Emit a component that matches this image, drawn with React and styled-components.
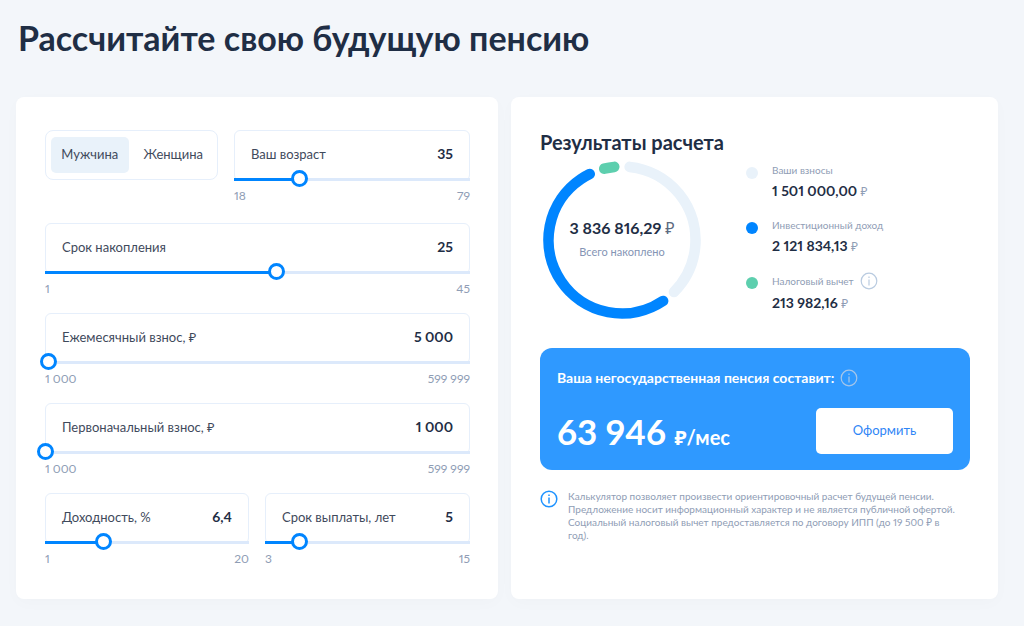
import React, { useState } from 'react';
import styled, { createGlobalStyle } from 'styled-components';

const GlobalStyle = createGlobalStyle`
  * {
    box-sizing: border-box;
  }
  body {
    margin: 0;
    background-color: #f3f6fa;
    color: #1f2e45;
    font-family: Lato, "Noto Sans", sans-serif;
    font-variant-numeric: proportional-nums;
  }
  button {
    font-family: inherit;
    cursor: pointer;
  }
`;

const Page = styled.main`
  padding: 14px 26px 27px 16px;
`;
const Title = styled.h1`
  margin: 0 0 35px 2px;
  font-size: 34px;
  line-height: 48px;
  font-weight: 700;
`;
const Columns = styled.div`
  display: grid;
  grid-template-columns: 482fr 487fr;
  gap: 13px;
`;
const Card = styled.section`
  padding: 33px 28px 32px 29px;
  background-color: white;
  border-radius: 8px;
  box-shadow: 0 4px 16px rgba(31, 46, 69, 0.02);
`;

const Form = styled.form`
  display: flex;
  flex-direction: column;
  gap: 16px;
`;
const Row = styled.div`
  display: grid;
  grid-template-columns: ${(props) => props.$columns || '1fr'};
  align-items: start;
  gap: 16px;
  margin-bottom: ${(props) => (props.$first ? '3px' : '0')};
`;
const Toggle = styled.div`
  display: flex;
  gap: 6px;
  height: 50px;
  padding: 6px 5px;
  border: 1px solid #e6effb;
  border-radius: 8px;
`;
const ToggleButton = styled.button`
  flex: 1;
  padding: 0 0 2px;
  border: none;
  border-radius: 5px;
  font-size: 13px;
  color: #3f4a5c;
  background-color: ${(props) => (props.$active ? '#e9f2fa' : 'transparent')};
`;

const FieldBox = styled.div`
  display: flex;
  align-items: center;
  justify-content: space-between;
  height: 51px;
  padding: 0 16px 4px;
  border: 1px solid #e6effb;
  border-radius: 6px;
`;
const Label = styled.label`
  font-size: 13px;
  color: #3f4a5c;
`;
const Value = styled.output`
  font-size: 14px;
  font-weight: 700;
`;
const Range = styled.input`
  appearance: none;
  display: block;
  width: calc(100% + 16px);
  height: 17px;
  margin: -10px -8px 0;
  background: transparent;
  cursor: pointer;
  &::-webkit-slider-runnable-track {
    height: 3px;
    background: linear-gradient(
      to right,
      transparent 8px,
      #0085ff 8px,
      #0085ff var(--fill),
      #dce9fb var(--fill),
      #dce9fb calc(100% - 8px),
      transparent calc(100% - 8px)
    );
  }
  &::-webkit-slider-thumb {
    appearance: none;
    width: 17px;
    height: 17px;
    margin-top: -8px;
    border: 3px solid #0085ff;
    border-radius: 50%;
    background-color: white;
  }
`;
const Limits = styled.div`
  display: flex;
  justify-content: space-between;
  font-size: 12px;
  line-height: 16px;
  color: #8f9db5;
`;

const ResultTitle = styled.h2`
  margin: 0;
  font-size: 20px;
  line-height: 24px;
  font-weight: 700;
`;
const Summary = styled.div`
  display: flex;
  gap: 45px;
  margin: 7px 0 29px 3px;
`;
const Donut = styled.div`
  display: grid;
  flex: none;
  width: 158px;
  height: 158px;
  > * {
    grid-area: 1 / 1;
  }
`;
const Total = styled.div`
  align-self: center;
  text-align: center;
  font-size: 16px;
  line-height: 24px;
  font-weight: 700;
`;
const Caption = styled.div`
  font-size: 11px;
  line-height: 24px;
  font-weight: 400;
  color: #8494b4;
`;
const Currency = styled.span`
  font-weight: 400;
  font-size: ${(props) => (props.$small ? '12px' : '16px')};
  line-height: 1;
  color: ${(props) => (props.$small ? '#8f9db5' : '#5d6a80')};
`;
const Legend = styled.ul`
  display: flex;
  flex-direction: column;
  gap: 13px;
  margin: 0;
  padding: 1px 0 0;
  list-style: none;
`;
const LegendItem = styled.li`
  display: flex;
  gap: 14px;
`;
const Dot = styled.span`
  width: 12px;
  height: 12px;
  margin-top: 5px;
  border-radius: 50%;
  background-color: ${(props) => props.$color};
`;
const LegendLabel = styled.div`
  display: flex;
  align-items: center;
  gap: 6px;
  min-height: 16px;
  font-size: 10px;
  color: #8f9db5;
`;
const LegendValue = styled.div`
  font-size: 14px;
  line-height: 26px;
  font-weight: 700;
`;

const Pension = styled.div`
  padding: 20px 17px 16px 17px;
  border-radius: 12px;
  background-color: #2f99ff;
  color: white;
`;
const PensionLabel = styled.div`
  display: flex;
  align-items: center;
  gap: 6px;
  font-size: 14px;
  line-height: 20px;
  font-weight: 700;
`;
const PensionRow = styled.div`
  display: flex;
  align-items: center;
  justify-content: space-between;
  margin-top: 20px;
`;
const Amount = styled.div`
  font-size: 35px;
  line-height: 46px;
  font-weight: 700;
`;
const PerMonth = styled.span`
  font-size: 20px;
  line-height: 1;
`;
const SubmitButton = styled.button`
  width: 137px;
  height: 46px;
  padding: 0 0 2px;
  border: none;
  border-radius: 5px;
  background-color: white;
  color: #2f86f6;
  font-size: 13px;
`;
const Note = styled.div`
  display: flex;
  gap: 10px;
  margin-top: 20px;
  padding-right: 8px;
  color: #8f9db5;
`;
const NoteText = styled.p`
  margin: 0;
  font-size: 10px;
  line-height: 13px;
`;
const InfoSvg = styled.svg`
  flex: none;
  color: ${(props) => props.$color};
`;

const InfoIcon = ({ color, strokeWidth = 1.2 }) => (
  <InfoSvg $color={color} width="18" height="18" viewBox="0 0 18 18" fill="none" stroke="currentColor" strokeWidth={strokeWidth} aria-hidden="true">
    <circle cx="9" cy="9" r="7.8" />
    <path d="M9 7.4v6M9 4.4v1.5" />
  </InfoSvg>
);

const format = (value) => {
  const [whole, rest] = String(value).split('.');
  const grouped = whole.replace(/\B(?=(\d{3})+$)/g, ' ');
  return rest ? `${grouped},${rest}` : grouped;
};

const Field = ({ id, label, min, max, step = 1, initial }) => {
  const [value, setValue] = useState(initial);
  const part = (value - min) / (max - min);
  return (
    <div>
      <FieldBox>
        <Label htmlFor={id}>{label}</Label>
        <Value htmlFor={id}>{format(value)}</Value>
      </FieldBox>
      <Range
        id={id}
        type="range"
        min={min}
        max={max}
        step={step}
        value={value}
        onChange={(e) => setValue(Number(e.target.value))}
        style={{ '--fill': `calc(8px + (100% - 16px) * ${part})` }}
      />
      <Limits>
        <span>{format(min)}</span>
        <span>{format(max)}</span>
      </Limits>
    </div>
  );
};

const segments = [
  { color: '#e9f2fa', start: 6, length: 129 },
  { color: '#0085ff', start: 146, length: 188 },
  { color: '#5dcfae', start: 346, length: 8 },
];

const legend = [
  { label: 'Ваши взносы', value: '1 501 000,00', color: '#e9f2fa' },
  { label: 'Инвестиционный доход', value: '2 121 834,13', color: '#0085ff' },
  { label: 'Налоговый вычет', value: '213 982,16', color: '#5dcfae', info: true },
];

const App = () => {
  const [gender, setGender] = useState('Мужчина');

  return (
    <Page>
      <GlobalStyle />
      <Title>Рассчитайте свою будущую пенсию</Title>
      <Columns>
        <Card>
          <Form>
            <Row $columns="173fr 236fr" $first>
              <Toggle>
                {['Мужчина', 'Женщина'].map((name) => (
                  <ToggleButton
                    key={name}
                    type="button"
                    $active={gender === name}
                    aria-pressed={gender === name}
                    onClick={() => setGender(name)}
                  >
                    {name}
                  </ToggleButton>
                ))}
              </Toggle>
              <Field id="age" label="Ваш возраст" min={18} max={79} initial={35} />
            </Row>
            <Field id="term" label="Срок накопления" min={1} max={45} initial={25} />
            <Field id="monthly" label="Ежемесячный взнос, ₽" min={1000} max={599999} initial={5000} />
            <Field id="first" label="Первоначальный взнос, ₽" min={1000} max={599999} initial={1000} />
            <Row $columns="204fr 205fr">
              <Field id="yield" label="Доходность, %" min={1} max={20} step={0.1} initial={6.4} />
              <Field id="payout" label="Срок выплаты, лет" min={3} max={15} initial={5} />
            </Row>
          </Form>
        </Card>
        <Card>
          <ResultTitle>Результаты расчета</ResultTitle>
          <Summary>
            <Donut>
              <svg width="158" height="158" viewBox="0 0 158 158" fill="none" aria-hidden="true">
                {segments.map((s) => (
                  <circle
                    key={s.color}
                    cx="79"
                    cy="79"
                    r="73.5"
                    stroke={s.color}
                    strokeWidth="10.6"
                    strokeLinecap="round"
                    pathLength="360"
                    strokeDasharray={`${s.length} ${360 - s.length}`}
                    transform={`rotate(${s.start - 90} 79 79)`}
                  />
                ))}
              </svg>
              <Total>
                3 836 816,29 <Currency>₽</Currency>
                <Caption>Всего накоплено</Caption>
              </Total>
            </Donut>
            <Legend>
              {legend.map((item) => (
                <LegendItem key={item.label}>
                  <Dot $color={item.color} />
                  <div>
                    <LegendLabel>
                      {item.label}
                      {item.info && <InfoIcon color="#b9cbe0" />}
                    </LegendLabel>
                    <LegendValue>
                      {item.value} <Currency $small>₽</Currency>
                    </LegendValue>
                  </div>
                </LegendItem>
              ))}
            </Legend>
          </Summary>
          <Pension>
            <PensionLabel>
              Ваша негосударственная пенсия составит:
              <InfoIcon color="#a5c6ea" />
            </PensionLabel>
            <PensionRow>
              <Amount>
                63 946 <PerMonth>₽/мес</PerMonth>
              </Amount>
              <SubmitButton type="button">Оформить</SubmitButton>
            </PensionRow>
          </Pension>
          <Note>
            <InfoIcon color="#1f93ff" strokeWidth={1.5} />
            <NoteText>
              Калькулятор позволяет произвести ориентировочный расчет будущей пенсии. Предложение носит
              информационный характер и не является публичной офертой. Социальный налоговый вычет
              предоставляется по договору ИПП (до 19 500 ₽ в год).
            </NoteText>
          </Note>
        </Card>
      </Columns>
    </Page>
  );
};

export default App;
